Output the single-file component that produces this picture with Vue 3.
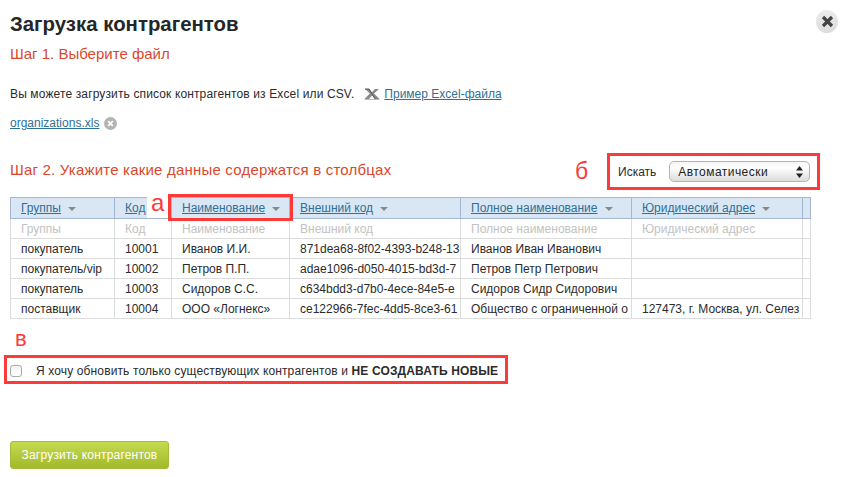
<script setup>
const columns = [
  { title: 'Группы', cls: 'c1', arrow: true },
  { title: 'Код', cls: 'c2', arrow: false },
  { title: 'Наименование', cls: 'c3', arrow: true },
  { title: 'Внешний код', cls: 'c4', arrow: true },
  { title: 'Полное наименование', cls: 'c5', arrow: true },
  { title: 'Юридический адрес', cls: 'c6', arrow: true },
  { title: '', cls: 'c7', arrow: false },
]
const rows = [
  ['покупатель', '10001', 'Иванов И.И.', '871dea68-8f02-4393-b248-13', 'Иванов Иван Иванович', '', ''],
  ['покупатель/vip', '10002', 'Петров П.П.', 'adae1096-d050-4015-bd3d-7', 'Петров Петр Петрович', '', ''],
  ['покупатель', '10003', 'Сидоров С.С.', 'c634bdd3-d7b0-4ece-84e5-e', 'Сидоров Сидр Сидорович', '', ''],
  ['поставщик', '10004', 'ООО «Логнекс»', 'ce122966-7fec-4dd5-8ce3-61', 'Общество с ограниченной о', '127473, г. Москва, ул. Селез', ''],
]
</script>

<template>
  <div class="page">
    <h1 class="title">Загрузка контрагентов</h1>
    <button class="close" aria-label="Закрыть">
      <svg width="13" height="13" viewBox="0 0 13 13"><path d="M2 2l9 9M11 2l-9 9" stroke="#444" stroke-width="3.2" fill="none"/></svg>
    </button>

    <h2 class="step">Шаг 1. Выберите файл</h2>

    <p class="intro">
      <span class="wide">Вы можете загрузить список контрагентов из Excel или CSV.</span>
      <svg class="xls" width="16" height="12" viewBox="0 0 16 12">
        <path d="M1 1h4l3 3.2L11 1h4l-5 4.6L15.5 11h-4.3L8 7.4 5 11H.5l5.3-5.4z" fill="#8a8a8a"/>
        <path d="M1 1h4l6.2 10" stroke="#555" stroke-width="1" fill="none"/>
        <path d="M.5 11.5h15" stroke="#bbb" stroke-width="1"/>
      </svg>
      <a class="link">Пример Excel-файла</a>
    </p>

    <p class="file">
      <a class="link">organizations.xls</a>
      <svg class="remove" width="13" height="13" viewBox="0 0 13 13">
        <circle cx="6.5" cy="6.5" r="6.5" fill="#b4b4b4"/>
        <path d="M4.2 4.2l4.6 4.6M8.8 4.2l-4.6 4.6" stroke="#fff" stroke-width="1.8"/>
      </svg>
    </p>

    <div class="step2">
      <h2 class="step step-two">Шаг 2. Укажите какие данные содержатся в столбцах</h2>
      <div class="search">
        <span>Искать</span>
        <div class="select">
          <span>Автоматически</span>
          <svg width="7" height="12" viewBox="0 0 7 12"><path d="M3.5 0L7 4.5H0zM3.5 12L0 7.5h7z" fill="#222"/></svg>
        </div>
      </div>
    </div>

    <table class="grid">
      <thead>
        <tr>
          <th v-for="c in columns" :key="c.cls" :class="c.cls">
            <div class="cell head"><a class="link">{{ c.title }}</a><i v-if="c.arrow" class="arrow"></i></div>
          </th>
        </tr>
      </thead>
      <tbody>
        <tr class="hint">
          <td v-for="c in columns" :key="c.cls"><div class="cell">{{ c.title }}</div></td>
        </tr>
        <tr v-for="(r, i) in rows" :key="i">
          <td v-for="(v, j) in r" :key="j"><div class="cell">{{ v }}</div></td>
        </tr>
      </tbody>
    </table>

    <label class="only-existing">
      <span class="box"></span>
      <span class="wide">Я хочу обновить только существующих контрагентов и <b>НЕ СОЗДАВАТЬ НОВЫЕ</b></span>
    </label>

    <button class="submit">Загрузить контрагентов</button>

    <span class="mark mark-a">а</span>
    <span class="frame frame-a"></span>
    <span class="mark mark-b">б</span>
    <span class="frame frame-b"></span>
    <span class="mark mark-c">в</span>
    <span class="frame frame-c"></span>
  </div>
</template>

<style>
html, body { margin: 0; background: #fff; }
</style>

<style scoped>
.page {
  position: relative;
  box-sizing: border-box;
  width: 845px;
  height: 477px;
  overflow: hidden;
  padding: 12px 10px 0;
  background: #fff;
  color: #2b2b2b;
  font: 12px/16px "Liberation Sans", Arial, sans-serif;
}
.title { margin: 0; font-size: 20.4px; line-height: 24px; font-weight: 700; color: #262626; }
.close {
  position: absolute; top: 10px; right: 7px;
  display: flex; align-items: center; justify-content: center;
  width: 22px; height: 23px; padding: 0; border: 0; border-radius: 50%;
  background: linear-gradient(#ececec, #dcdcdc);
}
.step { margin: 8px 0 0; font-size: 15px; line-height: 20px; font-weight: 400; color: #d9482b; }
.step-two { margin: 0 0 3px; letter-spacing: .2px; }
.wide { letter-spacing: .13px; }
.intro { display: flex; align-items: center; margin: 22px 0 0; height: 16px; }
.xls { margin: 0 4px 0 10px; }
.link { color: #2f7096; text-decoration: underline; }
.file { display: flex; align-items: center; margin: 13px 0 0; height: 16px; }
.remove { margin-left: 5px; }
.step2 { display: flex; justify-content: space-between; align-items: center; margin-top: 22px; height: 37px; }
.search { display: flex; align-items: center; box-sizing: border-box; width: 213px; margin-right: 15px; padding: 0 10px 0 11px; gap: 13px; }
.select {
  display: flex; align-items: center; justify-content: space-between; box-sizing: border-box;
  width: 141px; height: 21px; padding: 0 6px 0 8px;
  border: 1px solid #b5b5b5; border-radius: 5px;
  background: linear-gradient(#f4f4f4, #fff 30%, #e8e8e8 75%, #dcdcdc);
  letter-spacing: .45px; color: #222;
}
.grid {
  table-layout: fixed; border-collapse: collapse; width: 801px; margin-top: 7px;
  border: 1px solid #a3b7d3;
}
.grid th, .grid td { padding: 0; border: 1px solid #dcdcdc; font-weight: 400; text-align: left; }
.grid th { background: #d9e6f3; border-color: #a3b7d3; }
.c1 { width: 103px; } .c2 { width: 56px; } .c3 { width: 117px; } .c4 { width: 170px; }
.c5 { width: 170px; } .c6 { width: 170px; }
.cell { display: flex; align-items: center; height: 19px; padding-left: 10px; overflow: hidden; white-space: nowrap; }
.head { height: 20px; }
.arrow {
  flex: none; width: 0; height: 0; margin: 2px 0 0 7px;
  border: 4px solid transparent; border-top: 4px solid #888; border-bottom: 0;
}
.hint td { color: #c2c2c2; }
.only-existing { display: flex; align-items: center; margin-top: 43px; height: 18px; }
.box {
  box-sizing: border-box; width: 12px; height: 12px; margin-right: 14px;
  border: 1px solid #a9a9a9; border-radius: 3px; background: linear-gradient(#f4f4f4, #fff);
}
.only-existing b { font-weight: 700; }
.submit {
  display: block; box-sizing: border-box; width: 159px; height: 28px; margin-top: 61px; padding: 0;
  border: 1px solid #a5bb3a; border-radius: 3px;
  background: linear-gradient(#c6da50, #a2b92b);
  color: #fff; font: 12px "Liberation Sans", Arial, sans-serif; letter-spacing: .2px;
}
.frame { position: absolute; box-sizing: border-box; border: 3px solid #fb3a3a; }
.frame-a { left: 168px; top: 194px; width: 125px; height: 27px; }
.frame-b { left: 607px; top: 153px; width: 213px; height: 37px; }
.frame-c { left: 4px; top: 355px; width: 504px; height: 29px; }
.mark { position: absolute; color: #fb3a3a; font-size: 22px; line-height: 24px; background: #fff; }
.mark-a { left: 147px; top: 191px; padding: 0 5px 3px 4px; font-size: 24px; }
.mark-b { left: 575px; top: 159px; font-size: 23px; }
.mark-c { left: 15px; top: 327px; }
</style>
